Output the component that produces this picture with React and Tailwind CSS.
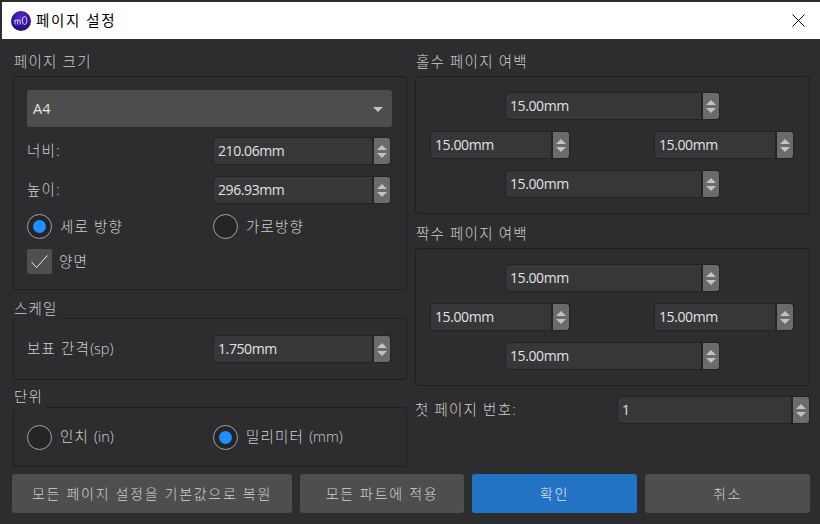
const FONT = "font-['Open_Sans','Noto_Sans_CJK_KR',sans-serif]";

function Spin({ value, className = "" }) {
  return (
    <div className={`flex h-[28px] rounded-[3px] border border-[#232326] bg-[#37373a] ${className}`}>
      <div className="flex-1 pl-[4px] text-[14px] leading-[26px] tracking-[-0.4px] text-[#e2e2e2]">{value}</div>
      <div className="flex w-[18px] flex-col items-center justify-center gap-[3px] rounded-r-[3px] border-l-2 border-[#232326] bg-[#6b6b6b]">
        <span className="h-0 w-0 border-x-[5px] border-b-[5px] border-x-transparent border-b-[#c2c2c2]" />
        <span className="h-0 w-0 border-x-[5px] border-t-[5px] border-x-transparent border-t-[#c2c2c2]" />
      </div>
    </div>
  );
}

function Radio({ checked, label, latin }) {
  return (
    <div className="flex h-[25px] items-center gap-[8px]">
      <span className="flex h-[25px] w-[25px] items-center justify-center rounded-full border-[1.5px] border-[#a3a3a3] bg-[#252528]">
        {checked && <span className="h-[13px] w-[13px] rounded-full bg-[#1e90ff]" />}
      </span>
      <span className={LABEL}>
        {label}
        {latin && <span className="tracking-[0px]">{latin}</span>}
      </span>
    </div>
  );
}

const LABEL = "text-[14.5px] leading-[20px] tracking-[1.2px] text-[#cfcfcf] font-light";
const BOX = "rounded-[3px] border border-[#1f1f22]";

function MarginGroup({ title }) {
  return (
    <div>
      <div className={`flex h-[34px] items-center pt-[6px] pl-[1px] ${LABEL}`}>{title}</div>
      <div className={`flex h-[138px] flex-col justify-center gap-[11px] ${BOX}`}>
        <Spin value="15.00mm" className="w-[215px] self-center" />
        <div className="flex justify-between pl-[14px] pr-[15px]">
          <Spin value="15.00mm" className="w-[140px]" />
          <Spin value="15.00mm" className="w-[140px]" />
        </div>
        <Spin value="15.00mm" className="w-[215px] self-center" />
      </div>
    </div>
  );
}

function Button({ children, className = "" }) {
  return (
    <button className={`h-[39px] rounded-[3px] text-[14px] tracking-[1.7px] font-light ${className}`}>
      {children}
    </button>
  );
}

export default function App() {
  const GRID = "grid grid-cols-[186px_178px] items-center";
  return (
    <div className={`flex h-[524px] w-[820px] flex-col overflow-hidden bg-[#2d2d30] pt-[2px] ${FONT}`}>
      <div className="ml-[2px] flex h-[37px] items-center justify-between bg-white pl-[9px] pr-[15px]">
        <div className="flex items-center gap-[5px]">
          <svg width="20" height="20" viewBox="0 0 20 20">
            <defs>
              <radialGradient id="g" cx="0.5" cy="0.35" r="0.7">
                <stop offset="0" stopColor="#5a2bd0" />
                <stop offset="0.7" stopColor="#2a1296" />
                <stop offset="1" stopColor="#150a4f" />
              </radialGradient>
            </defs>
            <circle cx="10" cy="10" r="10" fill="url(#g)" />
            <path d="M4 13.5V9M4 10c0-1.6 2.6-1.6 2.6 0V13.5M6.6 10c0-1.6 2.6-1.6 2.6 0V13.5" fill="none" stroke="#fff" strokeWidth="0.8" />
            <path d="M13.6 5.5c1.5 0 2.2 1.8 2.2 4s-.8 4-2.2 4-2.2-1.8-2.2-4 .7-4 2.2-4z" fill="none" stroke="#fff" strokeWidth="0.8" />
          </svg>
          <span className="text-[14.5px] tracking-[1.6px] text-black">페이지 설정</span>
        </div>
        <svg width="13" height="13" viewBox="0 0 13 13" stroke="#000" strokeWidth="1">
          <path d="M0.5 0.5L12.5 12.5M12.5 0.5L0.5 12.5" />
        </svg>
      </div>

      <div className="flex flex-1 flex-col">
        <div className="grid grid-cols-[394px_395px] gap-x-[8px] pl-[13px]">
          {/* left column */}
          <div>
            <div className={`flex h-[37px] items-center pt-[9px] pl-[1px] ${LABEL}`}>페이지 크기</div>
            <div className={`flex h-[214px] flex-col pl-[13px] pr-[14px] pt-[13px] ${BOX}`}>
              <div className="flex h-[37px] items-center justify-between rounded-[3px] bg-[#4d4d4d] pl-[6px] pr-[9px] pt-[1px] text-[14.5px] text-[#e2e2e2]">
                A4
                <span className="h-0 w-0 border-x-[5px] border-t-[5px] border-x-transparent border-t-[#c4c4c4]" />
              </div>
              <div className={`mt-[10px] ${GRID}`}>
                <span className={LABEL}>너비:</span>
                <Spin value="210.06mm" />
              </div>
              <div className={`mt-[11px] ${GRID}`}>
                <span className={LABEL}>높이:</span>
                <Spin value="296.93mm" />
              </div>
              <div className={`mt-[10px] ${GRID}`}>
                <Radio checked label="세로 방향" />
                <Radio label="가로방향" />
              </div>
              <div className="mt-[10px] flex h-[25px] items-center gap-[7px]">
                <span className="flex h-[25px] w-[25px] items-center justify-center rounded-[2px] bg-[#4f4f4f]">
                  <svg width="19" height="15" viewBox="0 0 19 15" fill="none" stroke="#e8e8e8" strokeWidth="1">
                    <path d="M1.5 8L6.5 13.5L17.5 1.5" />
                  </svg>
                </span>
                <span className={LABEL}>양면</span>
              </div>
            </div>

            <div className="relative z-10 mt-[10px] -mb-[1px] flex h-[19px] w-[48px] items-start bg-[#2d2d30] pl-[1px]">
              <span className={`-mt-[1px] ${LABEL}`}>스케일</span>
            </div>
            <div className={`flex h-[62px] items-center pl-[13px] pr-[14px] ${BOX}`}>
              <div className={GRID}>
                <span className={LABEL}>
                  보표 간격<span className="tracking-[0px]">(sp)</span>
                </span>
                <Spin value="1.750mm" />
              </div>
            </div>

            <div className="relative z-10 mt-[9px] -mb-[1px] flex h-[19px] w-[33px] items-start bg-[#2d2d30] pl-[1px]">
              <span className={`-mt-[2px] ${LABEL}`}>단위</span>
            </div>
            <div className={`flex h-[60px] items-center pl-[13px] pr-[14px] ${BOX}`}>
              <div className={GRID}>
                <Radio label="인치 " latin="(in)" />
                <Radio checked label="밀리미터 " latin="(mm)" />
              </div>
            </div>
          </div>

          {/* right column */}
          <div>
            <div className="h-[3px]" />
            <MarginGroup title="홀수 페이지 여백" />
            <MarginGroup title="짝수 페이지 여백" />
            <div className="mt-[10px] flex items-center justify-between">
              <span className={LABEL}>첫 페이지 번호:</span>
              <Spin value="1" className="w-[193px]" />
            </div>
          </div>
        </div>

        <div className="mt-[7px] flex gap-[8px] pl-[12px] text-[#d2d2d2]">
          <Button className="w-[280px] bg-[#4e4e4e]">모든 페이지 설정을 기본값으로 복원</Button>
          <Button className="w-[164px] bg-[#4e4e4e]">모든 파트에 적용</Button>
          <Button className="w-[165px] bg-[#2273c3] text-[#e6e6e6]">확인</Button>
          <Button className="w-[165px] bg-[#4e4e4e]">취소</Button>
        </div>
      </div>
    </div>
  );
}
